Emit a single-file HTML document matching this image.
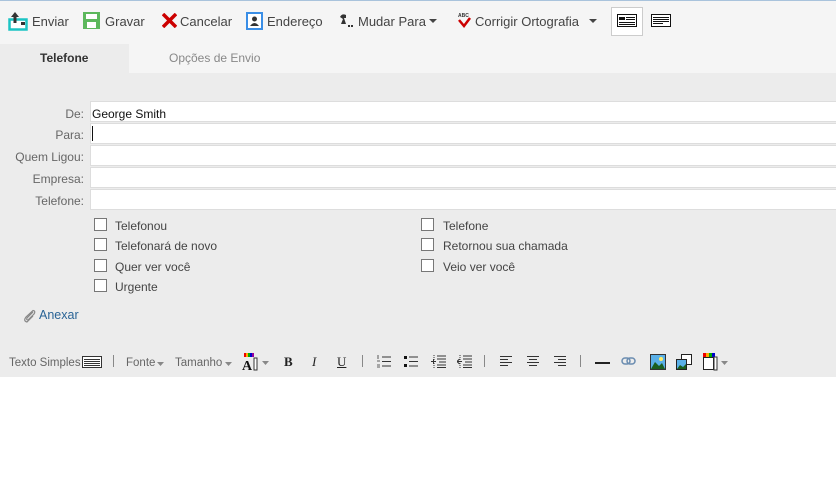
<!DOCTYPE html>
<html><head><meta charset="utf-8"><style>
*{margin:0;padding:0;box-sizing:border-box}
body{width:836px;height:492px;background:#fff;font-family:"Liberation Sans","DejaVu Sans",sans-serif;font-size:13px;color:#333;position:relative;overflow:hidden}
.a{position:absolute;white-space:nowrap}
.top{position:absolute;left:0;top:0;width:836px;height:73px;background:#f5f5f5;border-top:1px solid #a9c3dc}
.gray{position:absolute;left:0;top:73px;width:836px;height:304px;background:#ececec}
.tab{position:absolute;left:0;top:44px;width:129px;height:29px;background:#ececec}
.tb{font-size:13px;color:#444;top:14px}
.lbl{color:#666;font-size:12px;right:752px;text-align:right}
.fld{position:absolute;left:90px;width:746px;height:21px;background:#fff;border:1px solid #ddd;border-right:none}
.cb{position:absolute;width:13px;height:13px;border:1px solid #777;background:#fff}
.ct{font-size:12px;color:#444}
.ft{font-size:11.5px;color:#666;top:357px}
.sep{position:absolute;width:1px;height:12px;background:#888;top:355px}
</style></head><body>
<div class="top"></div>
<div class="gray"></div>
<div class="tab"></div>
<svg class="a" style="left:8px;top:11px" width="20" height="20" viewBox="0 0 20 20"><rect x="1.5" y="8.5" width="17" height="10" fill="#fff" stroke="#1cc4c4" stroke-width="2.5"/><rect x="13" y="11" width="4" height="3" fill="#333"/><path d="M7 1 L3 6 H5.5 V12 H8.5 V6 H11 Z" fill="#333"/></svg>
<div class="a tb" style="left:32px">Enviar</div>
<svg class="a" style="left:83px;top:12px" width="17" height="17" viewBox="0 0 17 17"><rect x="0" y="0" width="17" height="17" fill="#5cb85c"/><rect x="3" y="2" width="11" height="5" fill="#fff"/><rect x="4" y="10" width="9" height="6" fill="#fff"/></svg>
<div class="a tb" style="left:105px">Gravar</div>
<svg class="a" style="left:162px;top:13px" width="15" height="15" viewBox="0 0 15 15"><path d="M1 1 L14 14 M14 1 L1 14" stroke="#c00" stroke-width="3.5"/></svg>
<div class="a tb" style="left:180px">Cancelar</div>
<svg class="a" style="left:246px;top:12px" width="18" height="18" viewBox="0 0 18 18"><rect x="1" y="1" width="15" height="16" fill="#fff" stroke="#3a8ee6" stroke-width="2"/><circle cx="8.5" cy="7" r="2.5" fill="#333"/><path d="M4 14 Q8.5 8 13 14Z" fill="#333"/></svg>
<div class="a tb" style="left:267px">Endereço</div>
<svg class="a" style="left:338px;top:13px" width="16" height="16" viewBox="0 0 16 16"><path d="M2 4 Q4 0 8 2 L8 5 L6 5 L8 11 L3 11 L5 6 Z" fill="#333"/><rect x="10" y="12" width="2" height="2" fill="#333"/><rect x="13" y="12" width="2" height="2" fill="#333"/></svg>
<div class="a tb" style="left:358px">Mudar Para</div>
<svg class="a" style="left:429px;top:19px" width="8" height="5"><path d="M0 0H8L4 4Z" fill="#444"/></svg>
<svg class="a" style="left:458px;top:12px" width="13" height="16" viewBox="0 0 13 16"><text x="0" y="5" font-size="5" font-family="Liberation Sans" font-weight="bold" fill="#333">ABC</text><path d="M1 8 L6 14 L12 6" stroke="#c00" stroke-width="2.5" fill="none"/></svg>
<div class="a tb" style="left:475px">Corrigir Ortografia</div>
<svg class="a" style="left:589px;top:19px" width="8" height="5"><path d="M0 0H8L4 4Z" fill="#444"/></svg>
<div class="a" style="left:611px;top:7px;width:32px;height:29px;border:1px solid #ccc;background:#fff"></div>
<svg class="a" style="left:617px;top:14px" width="20" height="13"><rect x=".5" y=".5" width="19" height="12" fill="#fff" stroke="#111"/><rect x="2" y="3" width="6" height="3" fill="#111"/><path d="M9 3.5H18M9 5.5H18M2 8.5H18M2 10.5H18" stroke="#111"/></svg>
<svg class="a" style="left:651px;top:14px" width="20" height="13"><rect x=".5" y=".5" width="19" height="12" fill="#fff" stroke="#111"/><path d="M2 3.5H18M2 5.5H18M2 7.5H18M2 9.5H12" stroke="#111"/></svg>
<div class="a" style="left:40px;top:51px;font-size:12px;font-weight:bold;color:#333">Telefone</div>
<div class="a" style="left:169px;top:51px;font-size:12px;color:#888">Opções de Envio</div>
<div class="a lbl" style="top:107px">De:</div>
<div class="a lbl" style="top:128px">Para:</div>
<div class="a lbl" style="top:150px">Quem Ligou:</div>
<div class="a lbl" style="top:172px">Empresa:</div>
<div class="a lbl" style="top:194px">Telefone:</div>
<div class="fld" style="top:101px"></div>
<div class="fld" style="top:123px"></div>
<div class="fld" style="top:145px"></div>
<div class="fld" style="top:167px"></div>
<div class="fld" style="top:189px"></div>
<div class="a" style="left:92px;top:107px;font-size:12px;color:#111">George Smith</div>
<div class="a" style="left:92px;top:126px;width:1px;height:15px;background:#111"></div>
<div class="cb" style="left:94px;top:218px"></div><div class="a ct" style="left:115px;top:219px">Telefonou</div>
<div class="cb" style="left:94px;top:238px"></div><div class="a ct" style="left:115px;top:239px">Telefonará de novo</div>
<div class="cb" style="left:94px;top:259px"></div><div class="a ct" style="left:115px;top:260px">Quer ver você</div>
<div class="cb" style="left:94px;top:279px"></div><div class="a ct" style="left:115px;top:280px">Urgente</div>
<div class="cb" style="left:421px;top:218px"></div><div class="a ct" style="left:443px;top:219px">Telefone</div>
<div class="cb" style="left:421px;top:238px"></div><div class="a ct" style="left:443px;top:239px">Retornou sua chamada</div>
<div class="cb" style="left:421px;top:259px"></div><div class="a ct" style="left:443px;top:260px">Veio ver você</div>
<svg class="a" style="left:23px;top:309px" width="14" height="14" viewBox="0 0 14 14"><path d="M10 3 L4 9 Q3 11 5 11 L11 5 Q13 2 10 1.5 L3 8 Q0 12 4 13 L10 7" stroke="#888" stroke-width="1.2" fill="none"/></svg>
<div class="a" style="left:39px;top:308px;font-size:12.5px;color:#2a6496">Anexar</div>
<div class="a ft" style="left:9px">Texto Simples</div>
<svg class="a" style="left:82px;top:356px" width="20" height="12"><rect x=".5" y=".5" width="19" height="11" fill="#fff" stroke="#333"/><path d="M2 3.5H18M2 5.5H18M2 7.5H18M2 9.5H18" stroke="#333"/></svg>
<div class="sep" style="left:113px"></div>
<div class="a ft" style="left:126px">Fonte</div><svg class="a" style="left:157px;top:362px" width="7" height="4"><path d="M0 0H7L3.5 4Z" fill="#888"/></svg>
<div class="a ft" style="left:175px">Tamanho</div><svg class="a" style="left:225px;top:362px" width="7" height="4"><path d="M0 0H7L3.5 4Z" fill="#888"/></svg>
<svg class="a" style="left:242px;top:353px" width="18" height="18" viewBox="0 0 18 18"><rect x="2" y="0" width="2" height="4" fill="#e00"/><rect x="4" y="0" width="2" height="4" fill="#fa0"/><rect x="6" y="0" width="2" height="4" fill="#0a0"/><rect x="8" y="0" width="2" height="4" fill="#00c"/><rect x="10" y="0" width="2" height="4" fill="#909"/><text x="0" y="17" font-size="14" font-weight="bold" font-family="Liberation Serif" fill="#111">A</text><rect x="12" y="5" width="3" height="12" fill="#fff" stroke="#333"/></svg>
<svg class="a" style="left:262px;top:361px" width="7" height="4"><path d="M0 0H7L3.5 4Z" fill="#888"/></svg>
<div class="a" style="left:284px;top:354px;font-family:'Liberation Serif',serif;font-weight:bold;font-size:13px;color:#222">B</div>
<div class="a" style="left:312px;top:354px;font-family:'Liberation Serif',serif;font-style:italic;font-size:13px;color:#222">I</div>
<div class="a" style="left:337px;top:354px;font-family:'Liberation Serif',serif;text-decoration:underline;font-size:13px;color:#222">U</div>
<div class="sep" style="left:362px"></div>
<svg class="a" style="left:377px;top:355px" width="14" height="13"><path d="M5 2H14M5 6.5H14M5 11H14" stroke="#333"/><path d="M1 0V4M0 6H3M0 10H3M0 12H3" stroke="#333" stroke-width=".8"/></svg>
<svg class="a" style="left:404px;top:355px" width="14" height="13"><rect x="0" y="1" width="3" height="3" fill="#111"/><rect x="0" y="9" width="3" height="3" fill="#111"/><path d="M5 2H14M5 6.5H14M5 11H14" stroke="#333"/></svg>
<svg class="a" style="left:431px;top:355px" width="15" height="13"><path d="M6 1H15M6 4H15M8 7H15M6 10H15M6 12.5H15" stroke="#333"/><path d="M0 6.5H5M2.5 4V9" stroke="#333"/><path d="M3 0V13" stroke="#333" stroke-dasharray="1 1"/></svg>
<svg class="a" style="left:457px;top:355px" width="15" height="13"><path d="M6 1H15M6 4H15M8 7H15M6 10H15M6 12.5H15" stroke="#333"/><path d="M0 6.5H5M2.5 4L0 6.5L2.5 9" stroke="#333" fill="none"/><path d="M3 0V13" stroke="#333" stroke-dasharray="1 1"/></svg>
<div class="sep" style="left:484px"></div>
<svg class="a" style="left:500px;top:356px" width="12" height="11"><path d="M0 .5H12M0 3.5H8M0 6.5H12M0 9.5H8" stroke="#333"/></svg>
<svg class="a" style="left:527px;top:356px" width="12" height="11"><path d="M0 .5H12M2 3.5H10M0 6.5H12M2 9.5H10" stroke="#333"/></svg>
<svg class="a" style="left:554px;top:356px" width="12" height="11"><path d="M0 .5H12M4 3.5H12M0 6.5H12M4 9.5H12" stroke="#333"/></svg>
<div class="sep" style="left:580px"></div>
<div class="a" style="left:595px;top:362px;width:15px;height:2px;background:#222"></div>
<svg class="a" style="left:621px;top:357px" width="15" height="9"><rect x="1" y="1" width="8" height="6" rx="3" fill="none" stroke="#6a8cb0" stroke-width="1.5"/><rect x="6" y="1" width="8" height="6" rx="3" fill="none" stroke="#6a8cb0" stroke-width="1.5"/></svg>
<svg class="a" style="left:650px;top:354px" width="16" height="16"><rect x=".5" y=".5" width="15" height="15" fill="#5ab0e8" stroke="#333"/><circle cx="11" cy="5" r="2" fill="#fe6"/><path d="M1 15L5 8L9 12L12 9L15 15Z" fill="#1a5e20"/></svg>
<svg class="a" style="left:676px;top:354px" width="16" height="16"><rect x="5.5" y=".5" width="10" height="10" fill="#fff" stroke="#222"/><rect x=".5" y="5.5" width="10" height="10" fill="#5ab0e8" stroke="#222"/><path d="M1 15L4 11L7 13L10 10V15Z" fill="#1a5e20"/></svg>
<svg class="a" style="left:703px;top:353px" width="16" height="18"><rect x="0" y="0" width="3" height="4" fill="#e00"/><rect x="3" y="0" width="3" height="4" fill="#fa0"/><rect x="6" y="0" width="3" height="4" fill="#0a0"/><rect x="9" y="0" width="3" height="4" fill="#00c"/><rect x=".5" y="4.5" width="10" height="12" fill="#fff" stroke="#222"/><rect x="11" y="4" width="3" height="13" fill="#fff" stroke="#333"/></svg>
<svg class="a" style="left:721px;top:361px" width="7" height="4"><path d="M0 0H7L3.5 4Z" fill="#888"/></svg>
</body></html>
